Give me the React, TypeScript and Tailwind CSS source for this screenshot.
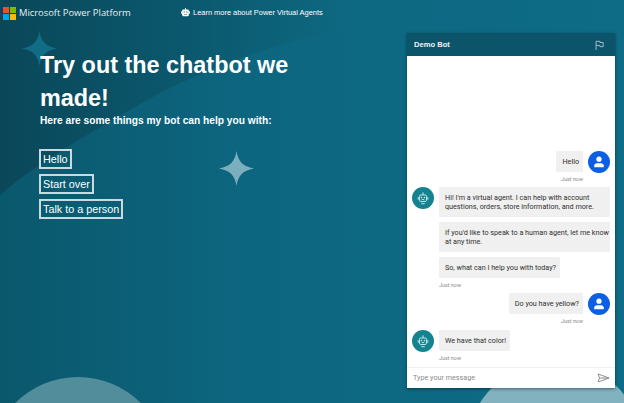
import { ReactNode } from "react";

function Star({ className }: { className: string }) {
  return (
    <svg viewBox="0 0 36 36" className={className} fill="currentColor">
      <path d="M18 0C19.5 10 24 16 36 18C24 20 19.5 26 18 36C16.5 26 12 20 0 18C12 16 16.5 10 18 0Z" />
    </svg>
  );
}

function BotOutline({ className }: { className: string }) {
  return (
    <svg viewBox="0 0 16 16" className={className} fill="none" stroke="currentColor" strokeWidth="1.1">
      <rect x="4" y="4.5" width="8" height="7.5" rx="1.5" />
      <path d="M8 4.5V1.5M2.5 7V10M13.5 7V10M6 14.5H10M6.5 9.8H9.5" />
      <circle cx="6.3" cy="7.4" r="0.5" fill="currentColor" />
      <circle cx="9.7" cy="7.4" r="0.5" fill="currentColor" />
    </svg>
  );
}

function BotSolid({ className }: { className: string }) {
  return (
    <svg viewBox="0 0 12 12" className={className} fill="#fff">
      <rect x="5.4" y="0" width="1.2" height="2.5" />
      <rect x="0" y="4.5" width="1.5" height="3" />
      <rect x="10.5" y="4.5" width="1.5" height="3" />
      <path fillRule="evenodd" d="M3 2H9A1.5 1.5 0 0 1 10.5 3.5V9A2 2 0 0 1 8.5 11H3.5A2 2 0 0 1 1.5 9V3.5A1.5 1.5 0 0 1 3 2ZM3.5 4.5V6H5V4.5ZM7 4.5V6H8.5V4.5ZM4 8V8.8H8V8Z" />
    </svg>
  );
}

function BotAvatar() {
  return (
    <div className="flex h-[22px] w-[22px] shrink-0 items-center justify-center rounded-full bg-[#13838f] text-[#cfe6ea]">
      <BotOutline className="h-[14px] w-[14px]" />
    </div>
  );
}

function UserAvatar() {
  return (
    <div className="flex h-[22px] w-[22px] shrink-0 items-center justify-center rounded-full bg-[#0b5fe3]">
      <svg viewBox="0 0 16 16" className="h-3.5 w-3.5" fill="#fff">
        <circle cx="8" cy="4.8" r="3" />
        <path d="M2.5 14V12.2C2.5 10.4 4 9.4 5.5 9.4H10.5C12 9.4 13.5 10.4 13.5 12.2V14Z" />
      </svg>
    </div>
  );
}

function Bubble({ children, className = "" }: { children: ReactNode; className?: string }) {
  return (
    <div className={`whitespace-nowrap rounded-[1px] bg-[#f0f0f0] py-[6px] pl-1.5 pr-1 text-[7.2px] leading-[9px] text-[#2f2f2f] ${className}`}>
      {children}
    </div>
  );
}

function Stamp() {
  return <div className="mt-[3px] text-[5.4px] leading-[8px] text-[#8a8a8a]">Just now</div>;
}

const prompts = ["Hello", "Start over", "Talk to a person"];

export default function App() {
  return (
    <div className="relative flex h-[403px] w-[624px] overflow-hidden bg-gradient-to-r from-[#0a586c] via-[#0d6680] via-40% to-[#0e6c86] font-['Liberation_Sans',sans-serif] text-white">
      <svg viewBox="0 0 624 403" className="absolute inset-0 h-full w-full">
        <defs>
          <linearGradient id="swoosh" gradientUnits="userSpaceOnUse" x1="0" y1="40" x2="340" y2="40">
            <stop offset="0" stopColor="#0a4759" />
            <stop offset="0.6" stopColor="#0b5a70" />
            <stop offset="1" stopColor="#0d6880" />
          </linearGradient>
        </defs>
        <path d="M0 0H340V30C250 50 190 75 130 110C75 142 35 165 0 195Z" fill="url(#swoosh)" />
      </svg>
      <div className="absolute -bottom-[152px] left-[-11px] h-[178px] w-[178px] rounded-full bg-[#528d9b]" />
      <div className="absolute -bottom-[134px] left-[467px] h-[176px] w-[176px] rounded-full bg-[#82b1c0]" />
      <Star className="absolute left-[22px] top-[31px] h-[35px] w-[35px] text-[#116c86]" />
      <Star className="absolute left-[219px] top-[151px] h-[35px] w-[35px] text-[#7cafbe]" />

      <div className="relative flex w-[407px] shrink-0 flex-col">
        <header className="flex h-[26px] items-center pl-[3px]">
          <svg viewBox="0 0 13 13" className="h-[13px] w-[13px] shrink-0">
            <rect width="6" height="6" fill="#f25022" />
            <rect x="7" width="6" height="6" fill="#7fba00" />
            <rect y="7" width="6" height="6" fill="#00a4ef" />
            <rect x="7" y="7" width="6" height="6" fill="#ffb900" />
          </svg>
          <span className="ml-[3px] w-[112px] whitespace-nowrap font-['Open_Sans',sans-serif] text-[9.4px] text-[#e8f0f2]">Microsoft Power Platform</span>
          <span className="ml-[50px] flex items-center gap-[3px] whitespace-nowrap text-[7.45px]">
            <BotSolid className="h-[9px] w-[9px]" />
            Learn more about Power Virtual Agents
          </span>
        </header>
        <div className="pl-10 pt-[23px]">
          <h1 className="w-[260px] text-[23.4px] font-bold leading-[33px]">Try out the chatbot we made!</h1>
          <p className="mt-[-2px] text-[10.2px] font-bold leading-[16px]">Here are some things my bot can help you with:</p>
          <div className="mt-[20px] flex flex-col items-start gap-[5px]">
            {prompts.map((label) => (
              <button key={label} className="-ml-px h-5 border-2 border-[#c8dbe0] px-[2px] text-[10.8px] leading-4 text-white">
                {label}
              </button>
            ))}
          </div>
        </div>
      </div>

      <div className="relative mt-[33px] flex h-[355px] w-[208px] shrink-0 flex-col bg-white font-['Roboto',sans-serif] shadow-[0_1px_3px_rgba(0,0,0,0.45)]">
        <div className="flex h-[23px] shrink-0 items-center justify-between bg-[#0b5469] pl-[7px] pr-[11px]">
          <span className="font-['Liberation_Sans',sans-serif] text-[7.6px] font-bold text-[#eef4f6]">Demo Bot</span>
          <svg viewBox="0 0 12 12" className="h-[10px] w-[10px]" fill="none" stroke="#a9c6ce" strokeWidth="1.1">
            <path d="M2.5 12V1.5H7V3H11V8H7V6.5H2.5" />
          </svg>
        </div>
        <div className="flex flex-1 flex-col justify-end px-[5px] pb-[5px]">
          <div className="flex justify-end gap-[5px]">
            <div className="flex flex-col items-end">
              <Bubble>Hello</Bubble>
              <Stamp />
            </div>
            <UserAvatar />
          </div>
          <div className="mt-[4px] flex gap-[5px]">
            <BotAvatar />
            <div className="flex flex-1 flex-col items-start gap-[5px]">
              <Bubble className="w-[171px]">
                Hi! I'm a virtual agent. I can help with account
                <br />
                questions, orders, store information, and more.
              </Bubble>
              <Bubble className="w-[171px]">
                If you'd like to speak to a human agent, let me know
                <br />
                at any time.
              </Bubble>
              <div>
                <Bubble>So, what can I help you with today?</Bubble>
                <Stamp />
              </div>
            </div>
          </div>
          <div className="mt-[4px] flex justify-end gap-[5px]">
            <div className="flex flex-col items-end">
              <Bubble>Do you have yellow?</Bubble>
              <Stamp />
            </div>
            <UserAvatar />
          </div>
          <div className="mt-[5px] flex gap-[5px]">
            <BotAvatar />
            <div>
              <Bubble>We have that color!</Bubble>
              <Stamp />
            </div>
          </div>
        </div>
        <div className="flex h-[21px] shrink-0 items-center justify-between border-t border-[#f0f0f0] pl-[6px] pr-[5px]">
          <span className="text-[7.2px] text-[#8a8a8a]">Type your message</span>
          <svg viewBox="0 0 13 10" className="h-[10px] w-[13px]" fill="none" stroke="#8f8f8f" strokeWidth="1">
            <path d="M1 1L12 5L1 9L2.5 5ZM2.5 5H12" />
          </svg>
        </div>
      </div>
    </div>
  );
}
